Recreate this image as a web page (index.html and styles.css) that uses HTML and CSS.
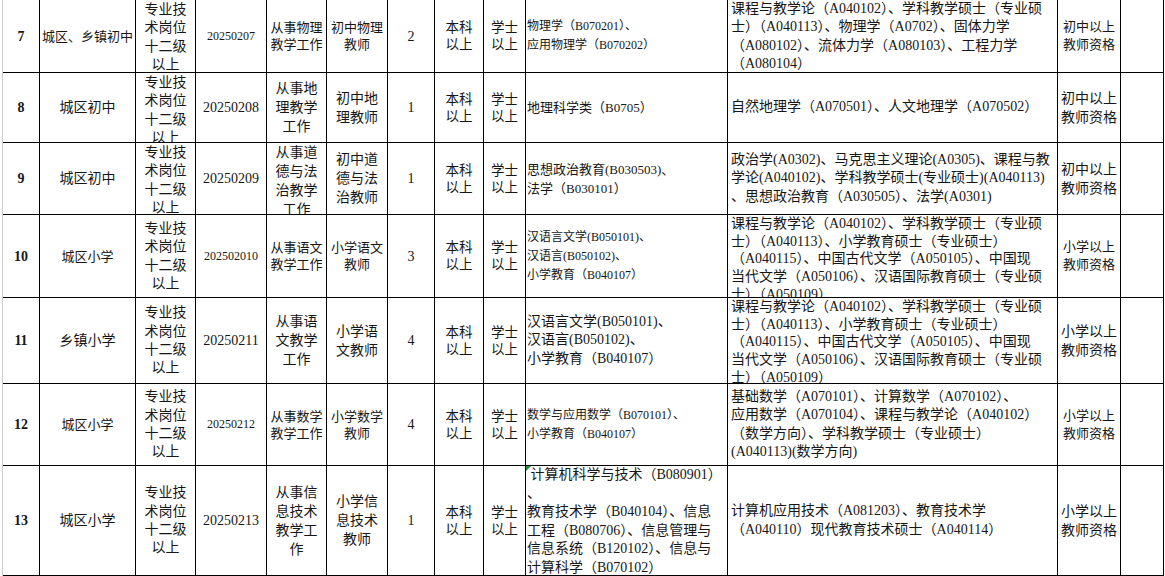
FILE: index.html
```html
<!DOCTYPE html>
<html lang="zh-CN">
<head>
<meta charset="utf-8">
<title>招聘岗位表</title>
<link rel="stylesheet" href="styles.css">
</head>
<body>
<div class="sheet">
  <div class="row sm">
    <div class="cell n"><div class="in">7</div></div>
    <div class="cell loc"><div class="in">城区、乡镇初中</div></div>
    <div class="cell pos"><div class="in">专业技<br>术岗位<br>十二级<br>以上</div></div>
    <div class="cell code"><div class="in">20250207</div></div>
    <div class="cell duty"><div class="in">从事物理<br>教学工作</div></div>
    <div class="cell post"><div class="in">初中物理<br>教师</div></div>
    <div class="cell cnt"><div class="in">2</div></div>
    <div class="cell edu"><div class="in">本科<br>以上</div></div>
    <div class="cell edu"><div class="in">学士<br>以上</div></div>
    <div class="cell maj"><div class="in">物理学（B070201）、<br>应用物理学（B070202）</div></div>
    <div class="cell req"><div class="in">课程与教学论（A040102）、学科教学硕士（专业硕<br>士）（A040113）、物理学（A0702）、固体力学<br>（A080102）、流体力学（A080103）、工程力学<br>（A080104）</div></div>
    <div class="cell qual"><div class="in">初中以上<br>教师资格</div></div>
    <div class="cell"></div>
  </div>
  <div class="row">
    <div class="cell n"><div class="in">8</div></div>
    <div class="cell loc"><div class="in">城区初中</div></div>
    <div class="cell pos"><div class="in">专业技<br>术岗位<br>十二级<br>以上</div></div>
    <div class="cell code"><div class="in">20250208</div></div>
    <div class="cell duty"><div class="in">从事地<br>理教学<br>工作</div></div>
    <div class="cell post"><div class="in">初中地<br>理教师</div></div>
    <div class="cell cnt"><div class="in">1</div></div>
    <div class="cell edu"><div class="in">本科<br>以上</div></div>
    <div class="cell edu"><div class="in">学士<br>以上</div></div>
    <div class="cell maj m13"><div class="in">地理科学类（B0705）</div></div>
    <div class="cell req"><div class="in">自然地理学（A070501）、人文地理学（A070502）</div></div>
    <div class="cell qual"><div class="in">初中以上<br>教师资格</div></div>
    <div class="cell"></div>
  </div>
  <div class="row">
    <div class="cell n"><div class="in">9</div></div>
    <div class="cell loc"><div class="in">城区初中</div></div>
    <div class="cell pos"><div class="in">专业技<br>术岗位<br>十二级<br>以上</div></div>
    <div class="cell code"><div class="in">20250209</div></div>
    <div class="cell duty"><div class="in">从事道<br>德与法<br>治教学<br>工作</div></div>
    <div class="cell post"><div class="in">初中道<br>德与法<br>治教师</div></div>
    <div class="cell cnt"><div class="in">1</div></div>
    <div class="cell edu"><div class="in">本科<br>以上</div></div>
    <div class="cell edu"><div class="in">学士<br>以上</div></div>
    <div class="cell maj m13"><div class="in">思想政治教育(B030503)、<br>法学（B030101）</div></div>
    <div class="cell req"><div class="in">政治学(A0302)、马克思主义理论(A0305)、课程与教<br>学论(A040102)、学科教学硕士(专业硕士)(A040113)<br>、思想政治教育（A030505）、法学(A0301)</div></div>
    <div class="cell qual"><div class="in">初中以上<br>教师资格</div></div>
    <div class="cell"></div>
  </div>
  <div class="row sm">
    <div class="cell n"><div class="in">10</div></div>
    <div class="cell loc"><div class="in">城区小学</div></div>
    <div class="cell pos"><div class="in">专业技<br>术岗位<br>十二级<br>以上</div></div>
    <div class="cell code"><div class="in">202502010</div></div>
    <div class="cell duty"><div class="in">从事语文<br>教学工作</div></div>
    <div class="cell post"><div class="in">小学语文<br>教师</div></div>
    <div class="cell cnt"><div class="in">3</div></div>
    <div class="cell edu"><div class="in">本科<br>以上</div></div>
    <div class="cell edu"><div class="in">学士<br>以上</div></div>
    <div class="cell maj"><div class="in">汉语言文学(B050101)、<br>汉语言(B050102)、<br>小学教育（B040107）</div></div>
    <div class="cell req tight"><div class="in">课程与教学论（A040102）、学科教学硕士（专业硕<br>士）（A040113）、小学教育硕士（专业硕士）<br>（A040115）、中国古代文学（A050105）、中国现<br>当代文学（A050106）、汉语国际教育硕士（专业硕<br>士）（A050109）</div></div>
    <div class="cell qual"><div class="in">小学以上<br>教师资格</div></div>
    <div class="cell"></div>
  </div>
  <div class="row">
    <div class="cell n"><div class="in">11</div></div>
    <div class="cell loc"><div class="in">乡镇小学</div></div>
    <div class="cell pos"><div class="in">专业技<br>术岗位<br>十二级<br>以上</div></div>
    <div class="cell code"><div class="in">20250211</div></div>
    <div class="cell duty"><div class="in">从事语<br>文教学<br>工作</div></div>
    <div class="cell post"><div class="in">小学语<br>文教师</div></div>
    <div class="cell cnt"><div class="in">4</div></div>
    <div class="cell edu"><div class="in">本科<br>以上</div></div>
    <div class="cell edu"><div class="in">学士<br>以上</div></div>
    <div class="cell maj m14"><div class="in">汉语言文学(B050101)、<br>汉语言(B050102)、<br>小学教育（B040107）</div></div>
    <div class="cell req tight"><div class="in">课程与教学论（A040102）、学科教学硕士（专业硕<br>士）（A040113）、小学教育硕士（专业硕士）<br>（A040115）、中国古代文学（A050105）、中国现<br>当代文学（A050106）、汉语国际教育硕士（专业硕<br>士）（A050109）</div></div>
    <div class="cell qual"><div class="in">小学以上<br>教师资格</div></div>
    <div class="cell"></div>
  </div>
  <div class="row sm">
    <div class="cell n"><div class="in">12</div></div>
    <div class="cell loc"><div class="in">城区小学</div></div>
    <div class="cell pos"><div class="in">专业技<br>术岗位<br>十二级<br>以上</div></div>
    <div class="cell code"><div class="in">20250212</div></div>
    <div class="cell duty"><div class="in">从事数学<br>教学工作</div></div>
    <div class="cell post"><div class="in">小学数学<br>教师</div></div>
    <div class="cell cnt"><div class="in">4</div></div>
    <div class="cell edu"><div class="in">本科<br>以上</div></div>
    <div class="cell edu"><div class="in">学士<br>以上</div></div>
    <div class="cell maj"><div class="in">数学与应用数学（B070101）、<br>小学教育（B040107）</div></div>
    <div class="cell req"><div class="in">基础数学（A070101）、计算数学（A070102）、<br>应用数学（A070104）、课程与教学论（A040102）<br>（数学方向）、学科教学硕士（专业硕士）<br>(A040113)(数学方向)</div></div>
    <div class="cell qual"><div class="in">小学以上<br>教师资格</div></div>
    <div class="cell"></div>
  </div>
  <div class="row">
    <div class="cell n"><div class="in">13</div></div>
    <div class="cell loc"><div class="in">城区小学</div></div>
    <div class="cell pos"><div class="in">专业技<br>术岗位<br>十二级<br>以上</div></div>
    <div class="cell code"><div class="in">20250213</div></div>
    <div class="cell duty"><div class="in">从事信<br>息技术<br>教学工<br>作</div></div>
    <div class="cell post"><div class="in">小学信<br>息技术<br>教师</div></div>
    <div class="cell cnt"><div class="in">1</div></div>
    <div class="cell edu"><div class="in">本科<br>以上</div></div>
    <div class="cell edu"><div class="in">学士<br>以上</div></div>
    <div class="cell maj m14 flag"><div class="in">&nbsp;计算机科学与技术（B080901）<br>、<br>教育技术学（B040104）、信息<br>工程（B080706）、信息管理与<br>信息系统（B120102）、信息与<br>计算科学（B070102）</div></div>
    <div class="cell req"><div class="in">计算机应用技术（A081203）、教育技术学<br>（A040110）现代教育技术硕士（A040114）</div></div>
    <div class="cell qual"><div class="in">小学以上<br>教师资格</div></div>
    <div class="cell"></div>
  </div>
</div>
</body>
</html>
```

FILE: styles.css
```css
html, body {
  margin: 0;
  padding: 0;
  background: #ffffff;
}

.sheet {
  margin-left: 2px;
  border-left: 1px solid #cfcfcf;
  display: grid;
  grid-template-columns: 37px 96px 60px 71px 60px 61px 47px 49px 42px 202px 330px 63px 43px;
  grid-template-rows: 73px 70px 72px 83px 86px 82px 110px;
  width: 1162px;
  font-family: "Liberation Serif", "Noto Sans CJK SC", serif;
  color: #161616;
  font-size: 14px;
}

.row {
  display: contents;
}

.cell {
  box-sizing: border-box;
  border-right: 1px solid #000;
  border-bottom: 1px solid #000;
  overflow: hidden;
  display: flex;
  flex-direction: column;
  text-align: center;
  white-space: nowrap;
  position: relative;
}

.in {
  margin: auto 0;
  flex-shrink: 0;
  line-height: 19px;
}

.n .in {
  font-weight: bold;
  font-size: 14px;
}

.loc .in {
  font-size: 14px;
}
.sm .loc .in {
  font-size: 13px;
}

.pos .in {
  line-height: 18.4px;
  padding-top: 1px;
}

.code .in {
  font-size: 14px;
}
.sm .code .in {
  font-size: 12px;
}

.duty .in,
.post .in {
  font-size: 14px;
  line-height: 19px;
}
.sm .duty .in,
.sm .post .in {
  font-size: 13px;
  line-height: 17px;
}

.cnt .in {
  font-size: 14px;
}

.edu .in {
  font-size: 13.5px;
  line-height: 17px;
}

.maj {
  text-align: left;
}
.maj .in {
  padding-left: 1px;
  font-size: 12px;
  line-height: 19px;
}
.maj.m13 .in {
  font-size: 13px;
}
.maj.m14 .in {
  font-size: 14px;
  line-height: 18.6px;
}

.req {
  text-align: left;
}
.req .in {
  padding-left: 3px;
  font-size: 14px;
  line-height: 18.3px;
}
.req.tight .in {
  line-height: 17.7px;
}

.qual .in {
  font-size: 14px;
  line-height: 19px;
}
.sm .qual .in {
  font-size: 13px;
  line-height: 18px;
}

.flag::before {
  content: "";
  position: absolute;
  left: 0;
  top: 0;
  width: 0;
  height: 0;
  border-top: 5px solid #1f8a3a;
  border-right: 5px solid transparent;
}
```
